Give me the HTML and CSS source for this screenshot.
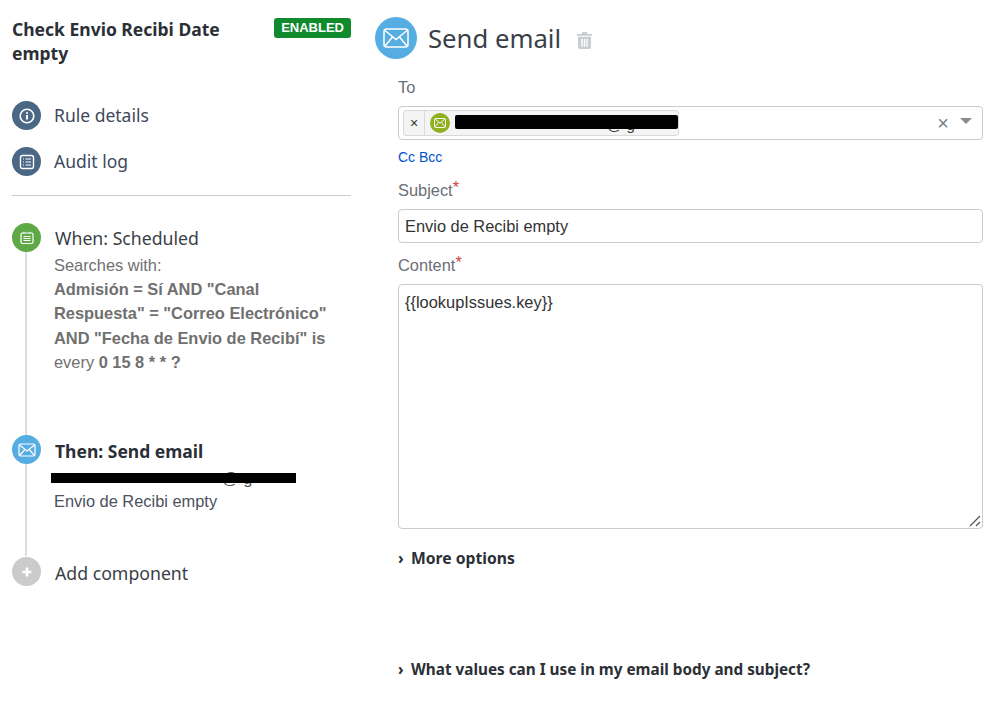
FILE: index.html
```html
<!DOCTYPE html>
<html lang="en">

<head>
    <meta charset="UTF-8">
    <title>Send email</title>
    <link rel="stylesheet" href="styles.css">
</head>

<body>
    <div class="page">
        <aside class="sidebar">
            <div class="rule-head">
                <h1>Check Envio Recibi Date empty</h1>
                <span class="badge">ENABLED</span>
            </div>

            <nav class="side-nav">
                <a class="side-link">
                    <span class="icon icon-nav">
                        <svg width="18" height="18" viewBox="0 0 18 18" fill="none" stroke="#fff">
                            <circle cx="9" cy="9" r="6.8" stroke-width="1.6" />
                            <path d="M9 8v4.4" stroke-width="2" />
                            <path d="M9 5.2v1.6" stroke-width="2" />
                        </svg>
                    </span>
                    Rule details
                </a>
                <a class="side-link">
                    <span class="icon icon-nav">
                        <svg width="18" height="18" viewBox="0 0 18 18" fill="none" stroke="#fff">
                            <rect x="2.5" y="2.5" width="13" height="13" rx="2" stroke-width="1.4" />
                            <path d="M5 6h1M7.5 6H13M5 9h1M7.5 9H13M5 12h1M7.5 12H13" stroke-width="1.2" />
                        </svg>
                    </span>
                    Audit log
                </a>
            </nav>

            <div class="timeline">
                <div class="step step-when">
                    <span class="icon icon-green">
                        <svg width="16" height="16" viewBox="0 0 16 16" fill="none" stroke="#fff">
                            <rect x="2" y="3" width="12" height="10.5" rx="1.5" stroke-width="1.2" />
                            <path d="M4.5 6.5h7M4.5 8.5h7M4.5 10.5h7" stroke-width="1" />
                            <path d="M5 1.8v2M11 1.8v2" stroke-width="1" />
                        </svg>
                    </span>
                    <div class="step-body">
                        <div class="step-title">When: Scheduled</div>
                        <div class="step-text muted">
                            Searches with:<br>
                            <b>Admisión = Sí AND "Canal Respuesta" = "Correo Electrónico" AND "Fecha de Envio de Recibí" is</b><br>
                            every <b>0 15 8 * * ?</b>
                        </div>
                    </div>
                </div>

                <div class="step step-then">
                    <span class="icon icon-blue">
                        <svg width="18" height="14" viewBox="0 0 18 14" fill="none" stroke="#fff" stroke-width="1.2">
                            <rect x="1" y="1" width="16" height="12" rx="1.5" />
                            <path d="M1.5 2l7.5 6 7.5-6M1.5 12.5l5-5.5M16.5 12.5l-5-5.5" />
                        </svg>
                    </span>
                    <div class="step-body">
                        <div class="step-title strong">Then: Send email</div>
                        <div class="step-text">
                            <div class="redacted-line">
                                <span class="address">@ g</span>
                                <span class="black-bar bar-step"></span>
                            </div>
                            Envio de Recibi empty
                        </div>
                    </div>
                </div>

                <div class="step step-add">
                    <span class="icon icon-grey">
                        <svg width="14" height="14" viewBox="0 0 14 14" fill="none" stroke="#fff" stroke-width="2.6">
                            <path d="M7 2.5v9M2.5 7h9" />
                        </svg>
                    </span>
                    <div class="step-title">Add component</div>
                </div>
            </div>
        </aside>

        <main class="editor">
            <div class="editor-head">
                <span class="icon-large">
                    <svg width="26" height="20" viewBox="0 0 26 20" fill="none" stroke="#fff" stroke-width="1.5">
                        <rect x="1" y="1" width="24" height="18" rx="2.5" />
                        <path d="M2 2.5l11 9 11-9M2 18l8-9.5M24 18l-8-9.5" />
                    </svg>
                </span>
                <h2>Send email</h2>
                <svg class="trash" width="15" height="17" viewBox="0 0 14 18" preserveAspectRatio="none" fill="#c9ccd1">
                    <path d="M5 0h4l1 2h4v2H0V2h4z" />
                    <path d="M1 5h12v11.5a1.5 1.5 0 0 1-1.5 1.500h-9A1.500 1.500 0 0 1 1 16.500zM4 7.500v8h1.300v-8zM6.350 7.500v8h1.300v-8zM8.700 7.500v8H10v-8z" fill-rule="evenodd" />
                </svg>
            </div>

            <div class="form">
                <label class="field-label label-to">To</label>
                <div class="select-box">
                    <div class="tag">
                        <span class="tag-remove">×</span>
                        <span class="tag-value">
                            <span class="tag-icon">
                                <svg width="12" height="10" viewBox="0 0 12 10" fill="none" stroke="#fff" stroke-width="0.9">
                                    <rect x="0.5" y="0.500" width="11" height="9" rx="1" />
                                    <path d="M1 1l5 4.200L11 1M1 9l3.500-4.500M11 9L7.500 4.500" />
                                </svg>
                            </span>
                            <span class="tag-text">@ g</span>
                            <span class="black-bar bar-tag"></span>
                        </span>
                    </div>
                    <span class="select-clear">×</span>
                    <span class="select-arrow"></span>
                </div>
                <div class="cc-links"><a>Cc</a> <a>Bcc</a></div>

                <label class="field-label label-subject">Subject<span class="req">*</span></label>
                <div class="input">Envio de Recibi empty</div>

                <label class="field-label label-content">Content<span class="req">*</span></label>
                <div class="textarea">
                    {{lookupIssues.key}}
                    <svg class="resize-grip" width="12" height="12" viewBox="0 0 12 12" stroke="#555" stroke-width="1.3">
                        <path d="M1 11L11 1M7 11l4-4" />
                    </svg>
                </div>

                <div class="expander expander-more"><span class="chev">›</span>More options</div>
                <div class="expander expander-help"><span class="chev">›</span>What values can I use in my email body and subject?</div>
            </div>
        </main>
    </div>
</body>

</html>
```

FILE: styles.css
```css
body {
    margin: 0;
    background-color: #fff;
    font-family: "Liberation Sans", Arial, sans-serif;
    font-size: 16.4px;
    color: #333;
}

.page {
    display: flex;
    height: 724px;
    overflow: hidden;
}

/* left column */
.sidebar {
    width: 339px;
    margin-left: 12px;
    flex-shrink: 0;
    font-family: "Noto Sans", sans-serif;
}

.rule-head {
    display: flex;
    justify-content: space-between;
    align-items: flex-start;
    height: 101px;
    padding-top: 17px;
    box-sizing: border-box;
}

.rule-head h1 {
    width: 230px;
    margin: 0;
    font-size: 17.5px;
    line-height: 24px;
    font-weight: 700;
    color: #2b2f36;
}

.badge {
    margin-top: 1px;
    padding: 0 7px;
    height: 20px;
    line-height: 20px;
    border-radius: 3px;
    background-color: #0f8a2c;
    color: #fff;
    font-family: "Liberation Sans", sans-serif;
    font-size: 13px;
    font-weight: 700;
}

.side-nav {
    display: flex;
    flex-direction: column;
    gap: 17px;
    padding-bottom: 19px;
    border-bottom: 1px solid #ccc;
}

.side-link {
    display: flex;
    align-items: center;
    gap: 13px;
    font-size: 17.5px;
    line-height: 29px;
    color: #3e4a5c;
}

.icon {
    display: flex;
    align-items: center;
    justify-content: center;
    flex-shrink: 0;
    width: 29px;
    height: 29px;
    border-radius: 50%;
}

.icon-nav {
    background-color: #4a6785;
}

.icon-green {
    background-color: #5fa846;
}

.icon-blue {
    background-color: #56ade2;
}

.icon-grey {
    background-color: #cbcbcb;
}

/* rule steps */
.timeline {
    position: relative;
    padding-top: 27px;
}

.timeline::before {
    content: "";
    position: absolute;
    left: 13px;
    top: 40px;
    height: 320px;
    width: 2px;
    background-color: #ddd;
}

.step {
    position: relative;
    display: flex;
    gap: 14px;
}

.step-when {
    height: 212px;
}

.step-then {
    height: 122px;
}

.step-add {
    align-items: flex-start;
}

.step-title {
    font-size: 17.7px;
    line-height: 30px;
    color: #3a3f47;
}

.step-add .step-title {
    margin-top: 1px;
}

.step-title.strong {
    margin-top: 1px;
    font-weight: 700;
    font-size: 17.5px;
    color: #2b2f36;
}

.step-text {
    width: 285px;
    margin-left: -1px;
    font-family: "Liberation Sans", sans-serif;
    font-size: 16.4px;
    line-height: 24.2px;
    color: #4a5260;
}

.step-text.muted {
    color: #707070;
}

.redacted-line {
    position: relative;
    height: 23px;
    padding-left: 168px;
}

.address {
    color: #555;
}

.black-bar {
    position: absolute;
    background-color: #000;
}

.bar-step {
    left: -3px;
    top: 7px;
    width: 245px;
    height: 10px;
}

/* right column */
.editor {
    flex: 1;
    margin-left: 24px;
    margin-right: 16px;
}

.editor-head {
    display: flex;
    align-items: center;
    height: 76px;
}

.icon-large {
    display: flex;
    align-items: center;
    justify-content: center;
    width: 42px;
    height: 42px;
    border-radius: 50%;
    background-color: #56ade2;
}

.editor-head h2 {
    margin: 0 0 0 11px;
    font-family: "Noto Sans", sans-serif;
    font-size: 25.7px;
    font-weight: 400;
    color: #3a3f47;
}

.trash {
    margin-left: 16px;
    margin-top: 5px;
}

.form {
    margin-left: 23px;
}

.field-label {
    display: block;
    line-height: 22px;
    color: #6b6f76;
}

.label-to {
    margin-bottom: 8px;
}

.label-content {
    margin-top: 11px;
    margin-bottom: 8px;
}

.label-subject {
    margin-bottom: 8px;
}

.req {
    position: relative;
    top: -3px;
    color: #d04437;
}

.select-box {
    position: relative;
    display: flex;
    align-items: center;
    height: 34px;
    box-sizing: border-box;
    padding-left: 4px;
    border: 1px solid #ccc;
    border-radius: 4px;
}

.tag {
    display: flex;
    height: 26px;
    box-sizing: border-box;
    border: 1px solid #d9d9d9;
    border-radius: 3px;
    background-color: #f4f4f4;
}

.tag-remove {
    width: 20px;
    text-align: center;
    line-height: 24px;
    font-size: 14px;
    border-right: 1px solid #d9d9d9;
}

.tag-value {
    position: relative;
    display: flex;
    align-items: center;
    width: 248px;
    padding-left: 5px;
    overflow: hidden;
}

.tag-icon {
    display: flex;
    align-items: center;
    justify-content: center;
    width: 20px;
    height: 20px;
    margin-right: 5px;
    border-radius: 50%;
    background-color: #8fb020;
}

.tag-text {
    margin-left: 152px;
    margin-top: 2px;
    white-space: nowrap;
    font-size: 15px;
}

.bar-tag {
    left: 30px;
    top: 4px;
    width: 223px;
    height: 14px;
    border-radius: 2px;
}

.select-clear {
    margin-left: auto;
    font-size: 20px;
    line-height: 20px;
    color: #7a7f87;
}

.select-arrow {
    width: 0;
    height: 0;
    margin: 0 10px 5px 11px;
    border-left: 6px solid transparent;
    border-right: 6px solid transparent;
    border-top: 6px solid #8a8a8a;
}

.cc-links {
    margin-top: 9px;
    margin-bottom: 13px;
    font-size: 14px;
    line-height: 17px;
}

.cc-links a {
    color: #0052cc;
}

.input {
    height: 34px;
    box-sizing: border-box;
    padding: 0 6px;
    border: 1px solid #ccc;
    border-radius: 4px;
    line-height: 32px;
    color: #333;
}

.textarea {
    position: relative;
    height: 245px;
    box-sizing: border-box;
    padding: 6px;
    border: 1px solid #ccc;
    border-radius: 4px;
    line-height: 22px;
    color: #333;
}

.resize-grip {
    position: absolute;
    right: 1px;
    bottom: 1px;
}

.expander {
    font-family: "Noto Sans", sans-serif;
    font-weight: 700;
    line-height: 22px;
    color: #2b2f36;
}

.expander-more {
    margin-top: 18px;
    font-size: 15.7px;
}

.expander-help {
    margin-top: 89px;
    font-size: 15.3px;
}

.chev {
    display: inline-block;
    width: 13px;
    font-weight: 700;
}
```
